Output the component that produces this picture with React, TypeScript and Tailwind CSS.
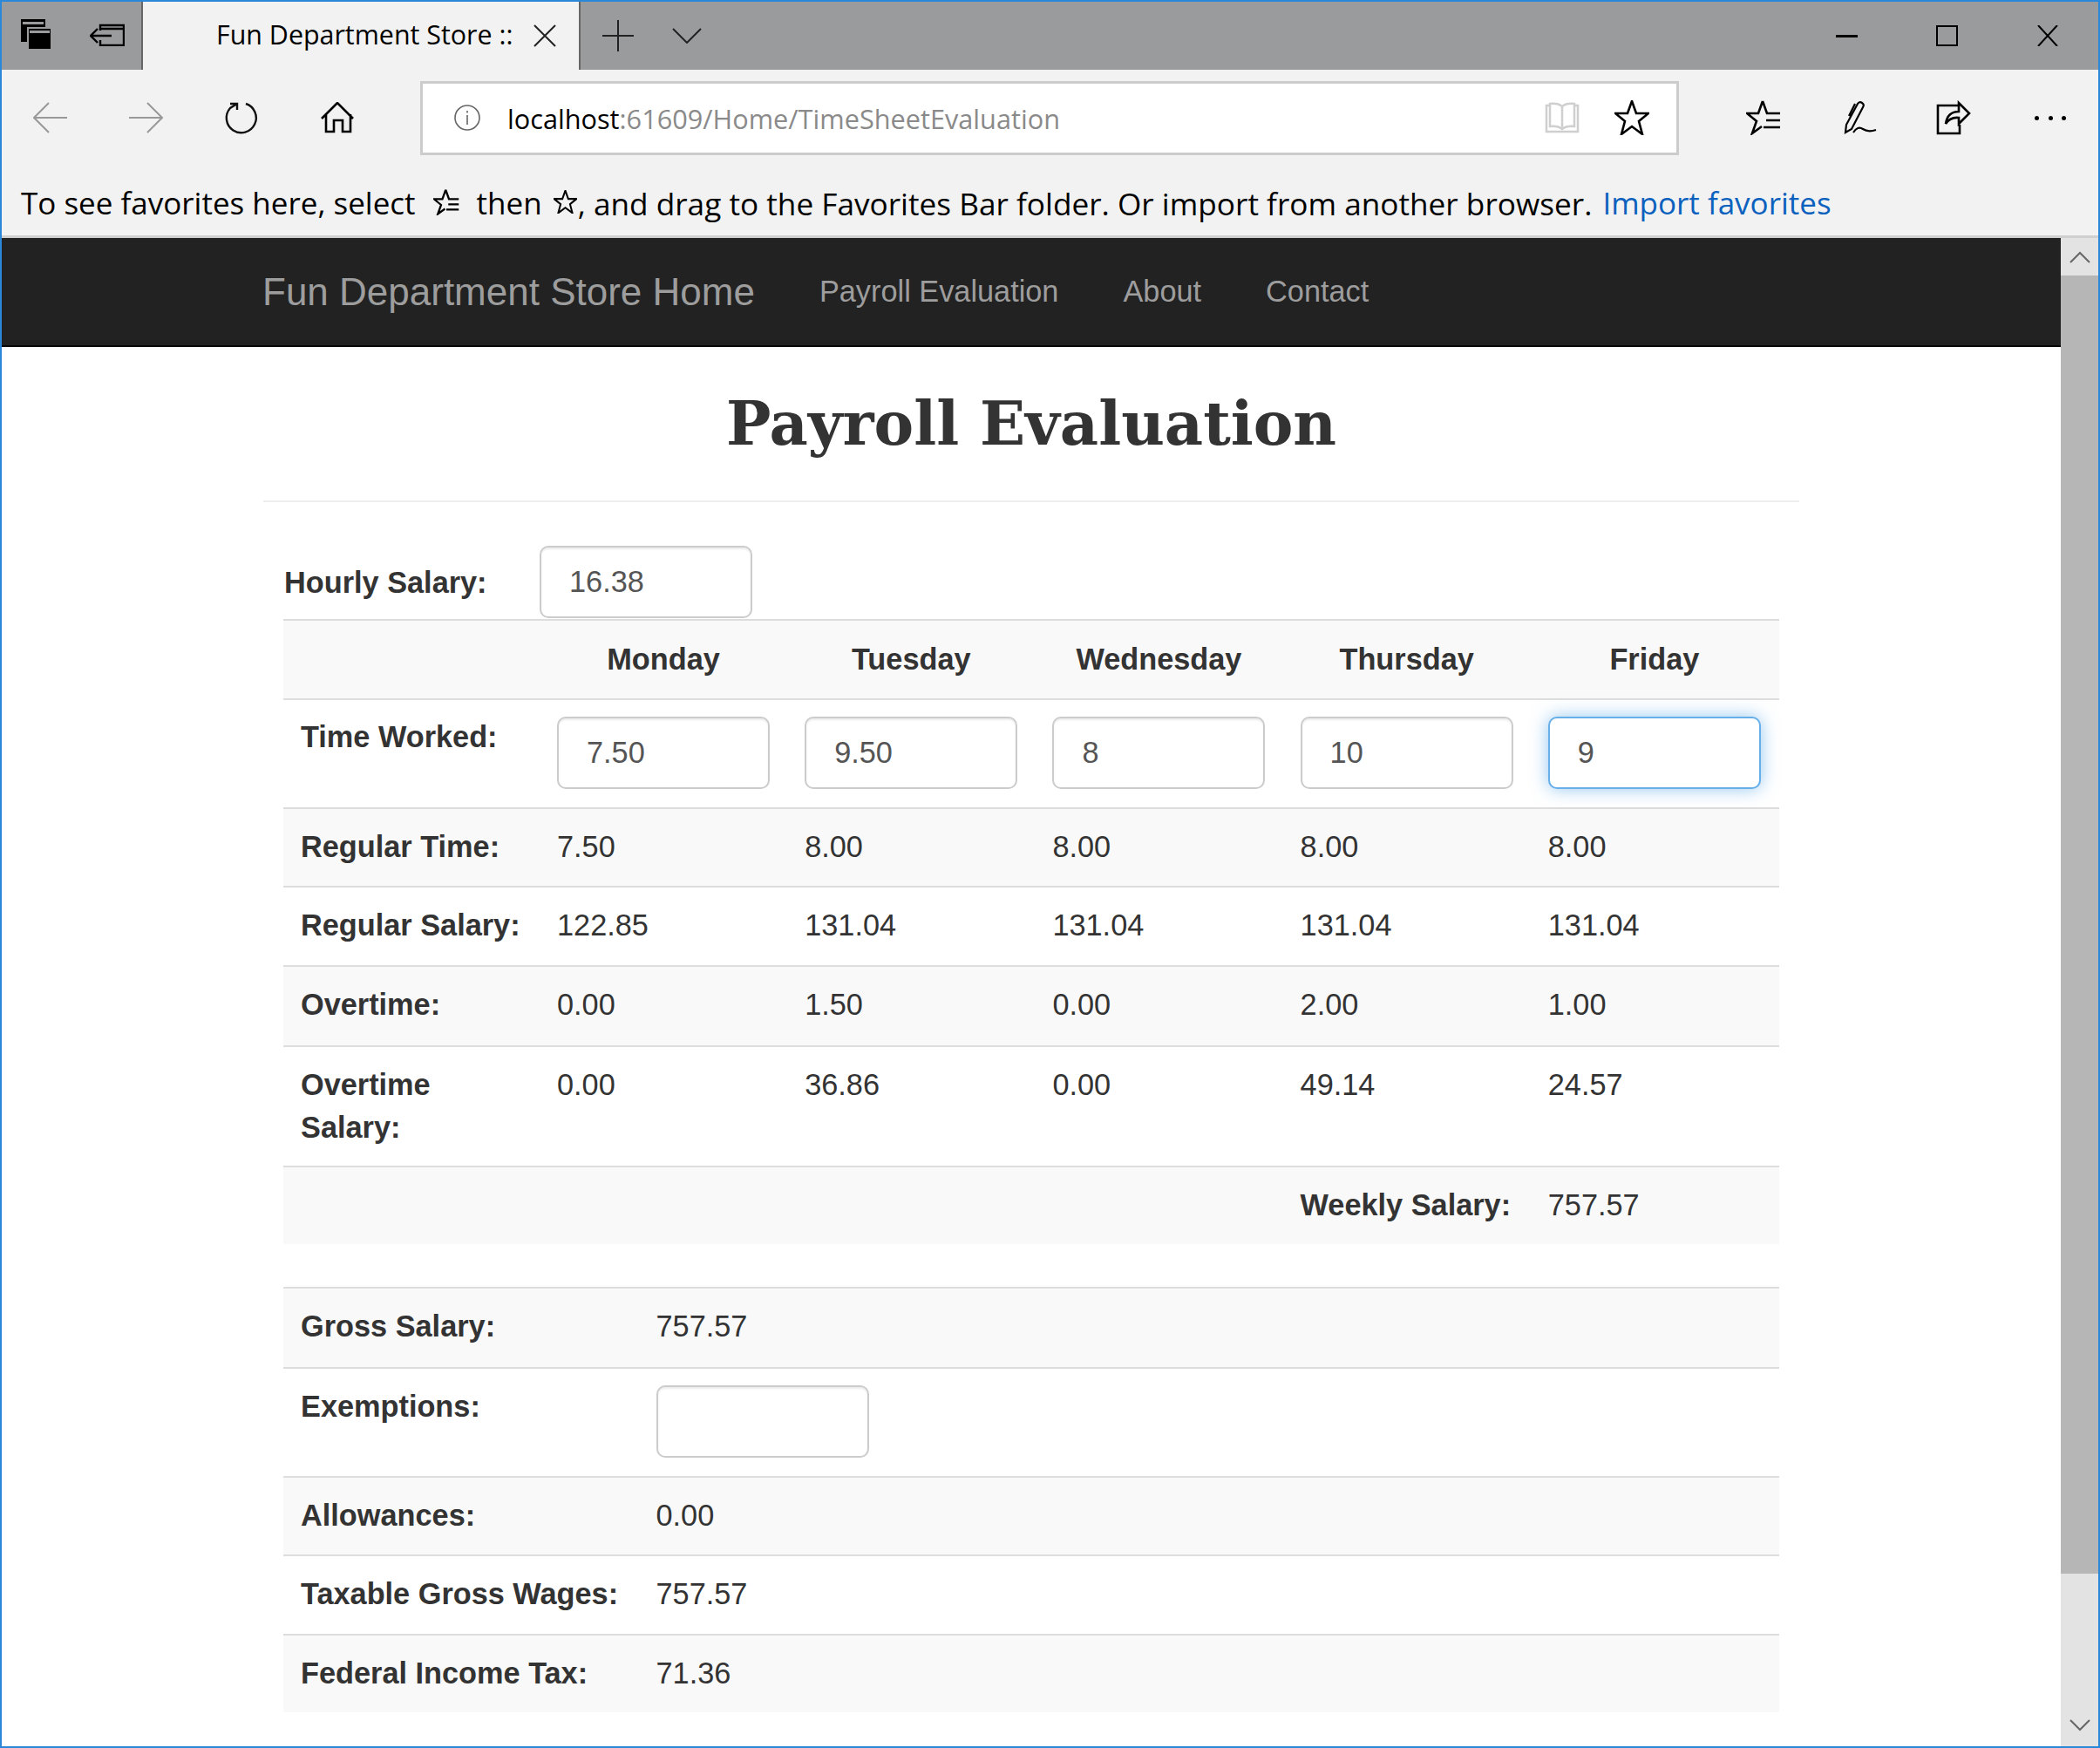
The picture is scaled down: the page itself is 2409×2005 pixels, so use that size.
import React from 'react';

const sans = 'font-["Liberation_Sans",Arial,sans-serif]';
const edge = 'font-["Open_Sans","Noto_Sans",sans-serif]';

const Stroke = ({ w, h, children, className = '', sw = 2 }: { w: number; h: number; children: React.ReactNode; className?: string; sw?: number }) => (
  <svg width={w} height={h} viewBox={`0 0 ${w} ${h}`} fill="none" stroke="currentColor" strokeWidth={sw} className={className}>
    {children}
  </svg>
);

const starPath = 'M20 1 L25 15 L39 15 L28 24 L32 39 L20 30 L8 39 L12 24 L1 15 L15 15 Z';
const favListPath = 'M19 1 L14 15 H1 L12 24 L7 38 L18 30 M19 1 L24 15 H39 M23 23 H39 M20 31 H39';

const TitleBar = () => (
  <div className="flex h-[78px] bg-[#9a9b9c]">
    <div className="flex w-[162px] items-start border-r-2 border-[#666]">
      <svg width="36" height="36" viewBox="0 0 36 36" className="ml-[22px] mt-[20px]">
        <rect x="0" y="0" width="28" height="26" fill="#000" />
        <rect x="2" y="3" width="24" height="3" fill="#9a9b9c" />
        <rect x="8" y="10" width="27" height="25" fill="#000" stroke="#9a9b9c" strokeWidth="2" />
        <rect x="10" y="13" width="23" height="3" fill="#9a9b9c" />
      </svg>
      <Stroke w={40} h={26} className="ml-[43px] mt-[25px] text-black" sw={2.4}>
        <path d="M12 8 V2 H39 V25 H12 V19 M12 6 H39 M1 14 H25 M9 6 L1 14 L9 22" />
      </Stroke>
    </div>
    <div className={`flex w-[500px] items-center bg-[#f2f2f2] pl-[84px] ${edge}`}>
      <span className="w-[340px] whitespace-nowrap pb-[2px] text-[30.4px] leading-none text-black">Fun Department Store ::</span>
      <Stroke w={26} h={26} className="ml-[24px] text-[#222]">
        <path d="M1 1 L25 25 M25 1 L1 25" />
      </Stroke>
    </div>
    <div className="flex flex-1 items-center border-l-2 border-[#666]">
      <Stroke w={36} h={36} className="ml-[25px] text-[#222]">
        <path d="M18 0 V36 M0 18 H36" />
      </Stroke>
      <Stroke w={34} h={18} className="ml-[44px] text-[#222]">
        <path d="M1 1 L17 17 L33 1" />
      </Stroke>
      <div className="ml-auto flex items-center">
        <div className="h-[3px] w-[25px] bg-black" />
        <div className="ml-[90px] h-[24px] w-[25px] border-2 border-black" />
        <Stroke w={24} h={24} className="ml-[91px] mr-[46px] text-black">
          <path d="M1 0 L23 24 M23 0 L1 24" />
        </Stroke>
      </div>
    </div>
  </div>
);

const ToolBar = () => (
  <div className="flex h-[110px] items-center bg-[#f2f2f2]">
    <Stroke w={40} h={36} className="ml-[36px] text-[#999]">
      <path d="M39 18 H2 M18 1 L1 18 L18 35" />
    </Stroke>
    <Stroke w={40} h={36} className="ml-[70px] text-[#999]">
      <path d="M0 18 H37 M21 1 L38 18 L21 35" />
    </Stroke>
    <Stroke w={40} h={40} className="ml-[69px] text-[#111]" sw={2.4}>
      <path d="M25 4 A17 17 0 1 1 7 9 L15 4 M7 4 H15 V11" />
    </Stroke>
    <Stroke w={38} h={36} className="ml-[71px] text-black" sw={2.6}>
      <path d="M1 19 L19 1 L37 19 M6 14 V34 H15 V21 H25 V34 H34 V14" />
    </Stroke>
    <div className={`ml-[76px] flex h-[85px] w-[1444px] items-center border-[3px] border-[#cccccc] bg-white ${edge}`}>
      <svg width="30" height="30" viewBox="0 0 30 30" fill="none" stroke="#666" strokeWidth="1.6" className="ml-[36px]">
        <circle cx="15" cy="15" r="14" />
        <path d="M15 12 V23 M15 7 V9.5" />
      </svg>
      <span className="ml-[31px] whitespace-nowrap pt-[2px] text-[30.7px] leading-none text-black">
        localhost<span className="text-[#8a8a8a]">:61609/Home/TimeSheetEvaluation</span>
      </span>
      <svg width="40" height="36" viewBox="0 0 40 36" fill="none" stroke="#cfcfcf" strokeWidth="2.5" className="ml-auto">
        <path d="M6 4 H2 V34 H38 V4 H34 M6 2 Q15 1 20 5 Q25 1 34 2 V28 Q25 27 20 31 Q15 27 6 28 Z M20 5 V31" />
      </svg>
      <svg width="40" height="40" viewBox="0 0 40 40" fill="none" stroke="#000" strokeWidth="2.6" className="ml-[40px] mr-[31px]">
        <path d={starPath} />
      </svg>
    </div>
    <svg width="40" height="40" viewBox="0 0 40 40" fill="none" stroke="#000" strokeWidth="2.6" className="ml-[77px]">
      <path d={favListPath} />
    </svg>
    <Stroke w={38} h={40} className="ml-[72px] text-black" sw={2.2}>
      <path d="M2 37 L3 28 L16 4 Q18 1 21 3 Q24 5 22 8 L9 33 Z M13 4 L6 18 M11 37 Q16 29 22 33 T37 34" />
    </Stroke>
    <Stroke w={40} h={40} className="ml-[68px] text-black" sw={2.6}>
      <path d="M26 6 H2 V38 H27 V28 M11 27 Q13 13 26 13 V3 L38 15 L26 27 V20 Q16 19 11 27 Z" />
    </Stroke>
    <div className="ml-[73px] flex gap-[10.5px]">
      <div className="size-[5px] rounded-full bg-black" />
      <div className="size-[5px] rounded-full bg-black" />
      <div className="size-[5px] rounded-full bg-black" />
    </div>
  </div>
);

const FavoritesBar = () => (
  <div className={`flex h-[83px] items-start border-b-[3px] border-[#d0d0d0] bg-[#f2f2f2] pl-[22px] pt-[17px] text-[35px] leading-[52px] text-black ${edge}`}>
    <span className="whitespace-nowrap">To see favorites here, select</span>
    <svg width="30" height="30" viewBox="0 0 40 40" fill="none" stroke="#000" strokeWidth="3" className="ml-[20px] mt-[10px]">
      <path d={favListPath} />
    </svg>
    <span className="ml-[20px] whitespace-nowrap">then</span>
    <svg width="27" height="27" viewBox="0 0 40 40" fill="none" stroke="#000" strokeWidth="3" className="ml-[13px] mt-[11px]">
      <path d={starPath} />
    </svg>
    <span className="ml-[1px] whitespace-nowrap text-[35.2px]">, and drag to the Favorites Bar folder. Or import from another browser.</span>
    <span className="ml-[12px] whitespace-nowrap text-[#0b61bd]">Import favorites</span>
  </div>
);

const NavBar = () => (
  <div className={`flex h-[125px] items-center border-b-[2px] border-[#080808] bg-[#222222] pl-[299px] text-[#9d9d9d] ${sans}`}>
    <span className="text-[44px] leading-none">Fun Department Store Home</span>
    <span className="ml-[74px] text-[34.3px] leading-none">Payroll Evaluation</span>
    <span className="ml-[74px] text-[34.3px] leading-none">About</span>
    <span className="ml-[74px] text-[34.3px] leading-none">Contact</span>
  </div>
);

const Field = ({ value = '', focus = false }: { value?: string; focus?: boolean }) => (
  <div
    className={
      'flex h-[83px] w-[244px] items-center rounded-[10px] border-[2.5px] bg-white pl-[32px] text-[#555] ' +
      (focus ? 'border-[#66afe9] shadow-[0_0_20px_rgba(102,175,233,0.7)]' : 'border-[#cccccc] shadow-[inset_0_2px_2px_rgba(0,0,0,0.075)]')
    }
  >
    {value}
  </div>
);

const days = ['Monday', 'Tuesday', 'Wednesday', 'Thursday', 'Friday'];

const rows = [
  { label: 'Regular Time:', h: 'h-[90px]', values: ['7.50', '8.00', '8.00', '8.00', '8.00'] },
  { label: 'Regular Salary:', h: 'h-[91px]', values: ['122.85', '131.04', '131.04', '131.04', '131.04'] },
  { label: 'Overtime:', h: 'h-[92px]', values: ['0.00', '1.50', '0.00', '2.00', '1.00'] },
  { label: 'Overtime Salary:', h: 'h-[138px]', values: ['0.00', '36.86', '0.00', '49.14', '24.57'] },
];

const Row = ({ children, className = '' }: { children: React.ReactNode; className?: string }) => (
  <div className={`flex border-t-[2.5px] border-[#dddddd] ${className}`}>{children}</div>
);

const Label = ({ children, className = 'w-[294px] pt-[19px]' }: { children: React.ReactNode; className?: string }) => (
  <div className={`shrink-0 px-[20px] font-bold ${className}`}>{children}</div>
);

const Cell = ({ children, className = 'w-[284.2px]' }: { children?: React.ReactNode; className?: string }) => (
  <div className={`shrink-0 px-[20px] pt-[19px] ${className}`}>{children}</div>
);

const TimeTable = () => (
  <div>
    <Row className="h-[91px] bg-[#f9f9f9]">
      <Label> </Label>
      {days.map((d) => (
        <div key={d} className="w-[284.2px] shrink-0 px-[20px] pt-[20px] text-center font-bold">{d}</div>
      ))}
    </Row>
    <Row className="h-[125px]">
      <Label className="w-[294px] pt-[18px]">Time Worked:</Label>
      {['7.50', '9.50', '8', '10', '9'].map((v, i) => (
        <div key={i} className="w-[284.2px] shrink-0 px-[20px] pt-[19px]">
          <Field value={v} focus={i === 4} />
        </div>
      ))}
    </Row>
    {rows.map((r, i) => (
      <Row key={r.label} className={`${r.h} ${i % 2 === 0 ? 'bg-[#f9f9f9]' : ''}`}>
        <Label>{r.label}</Label>
        {r.values.map((v, j) => (
          <Cell key={j}>{v}</Cell>
        ))}
      </Row>
    ))}
    <Row className="h-[90px] bg-[#f9f9f9]">
      <div className="w-[1146.6px] shrink-0" />
      <Label className="w-[284.2px] pt-[19px]">Weekly Salary:</Label>
      <Cell>757.57</Cell>
    </Row>
  </div>
);

const summary = [
  { label: 'Gross Salary:', value: '757.57', h: 'h-[92px]', odd: true },
  { label: 'Exemptions:', h: 'h-[125px]', odd: false },
  { label: 'Allowances:', value: '0.00', h: 'h-[90px]', odd: true },
  { label: 'Taxable Gross Wages:', value: '757.57', h: 'h-[91px]', odd: false },
  { label: 'Federal Income Tax:', value: '71.36', h: 'h-[90px]', odd: true },
];

const SummaryTable = () => (
  <div className="mt-[49px]">
    {summary.map((r) => (
      <Row key={r.label} className={`${r.h} ${r.odd ? 'bg-[#f9f9f9]' : ''}`}>
        <Label className="w-[407.5px] whitespace-nowrap pt-[19px]">{r.label}</Label>
        {r.value ? <Cell className="w-[400px]">{r.value}</Cell> : <div className="w-[400px] px-[20px] pt-[19px]"><Field /></div>}
      </Row>
    ))}
  </div>
);

const Scrollbar = () => (
  <div className="flex w-[43px] shrink-0 flex-col bg-[#e3e3e3]">
    <div className="flex h-[43px] items-center justify-center">
      <Stroke w={24} h={14} className="text-[#666]">
        <path d="M1 13 L12 2 L23 13" />
      </Stroke>
    </div>
    <div className="h-[1489px] bg-[#b6b6b6]" />
    <div className="mt-auto flex h-[47px] items-center justify-center pb-[2px]">
      <Stroke w={24} h={14} className="text-[#666]">
        <path d="M1 1 L12 12 L23 1" />
      </Stroke>
    </div>
  </div>
);

export default function App() {
  return (
    <div className="flex h-[2005px] w-[2409px] flex-col overflow-hidden border-2 border-[#2b88d8] bg-white">
      <TitleBar />
      <ToolBar />
      <FavoritesBar />
      <div className="flex min-h-0 flex-1">
        <div className={`min-w-0 flex-1 text-[34.3px] leading-[49px] text-[#333] ${sans}`}>
          <NavBar />
          <div className="ml-[300px] w-[1762px]">
            <div className="flex h-[178px] items-center justify-center border-b-[2.5px] border-[#eeeeee]">
              <h1 className='font-["DejaVu_Serif",Georgia,serif] text-[68.4px] font-bold leading-none text-[#333]'>Payroll Evaluation</h1>
            </div>
            <div className="mx-[23px]">
              <div className="flex h-[134px] items-end">
                <span className="mb-[17px] w-[294px] pl-[1px] font-bold">Hourly Salary:</span>
                <div className="mb-[1px]">
                  <Field value="16.38" />
                </div>
              </div>
              <TimeTable />
              <SummaryTable />
            </div>
          </div>
        </div>
        <Scrollbar />
      </div>
    </div>
  );
}
